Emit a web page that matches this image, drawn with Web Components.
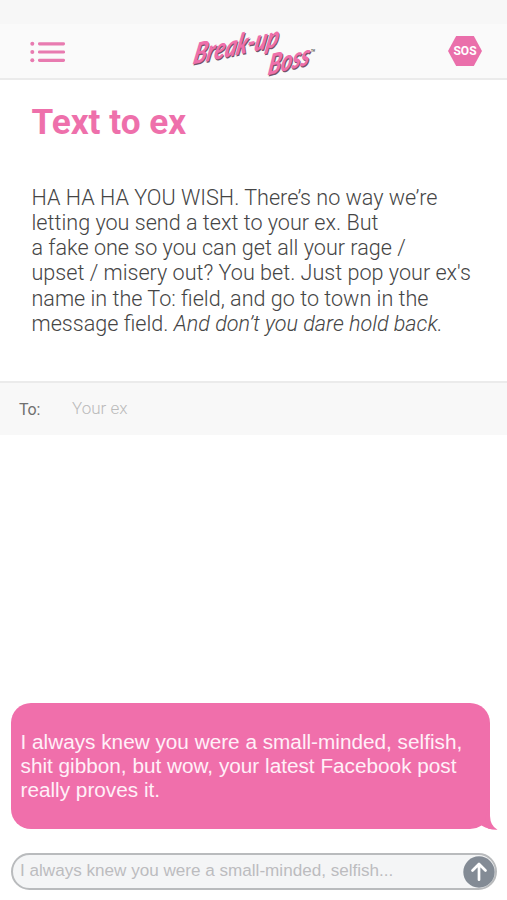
<!DOCTYPE html>
<html lang="en"><head><meta charset="utf-8"><title>Text to ex</title>
<style>html,body{margin:0;height:100%;background:#fff;overflow:hidden}</style></head>
<body><breakup-app></breakup-app>
<script>
const define=(name,html)=>customElements.define(name,class extends HTMLElement{
  constructor(){super();this.attachShadow({mode:'open'}).innerHTML=html;}
});
define('menu-icon',`<style>:host{display:block;width:36px;height:22px}svg{display:block}</style>
<svg width="36" height="22" viewBox="0 0 36 22" fill="#e87bb0"><circle cx="2.3" cy="2.8" r="2"/><circle cx="2.3" cy="11" r="2"/><circle cx="2.3" cy="19.3" r="2"/>
<rect x="8" y="1.2" width="27" height="3.2" rx="1.4"/><rect x="8" y="9.4" width="27" height="3.2" rx="1.4"/><rect x="8" y="17.7" width="27" height="3.2" rx="1.4"/></svg>`);
define('brand-logo',`<style>:host{display:block;width:130px;height:56px}svg{display:block;overflow:visible}
text{font-family:Lato,sans-serif;font-weight:900;font-style:italic}.s{fill:#77536a}.f{fill:#ee6fab}</style>
<svg width="130" height="56" viewBox="0 0 130 56">
<g transform="translate(3 40.5) rotate(-12) skewX(-24)"><text class="s" x="1.2" y="1.4" font-size="28" textLength="87" lengthAdjust="spacingAndGlyphs" aria-hidden="true">Break-up</text><text class="f" font-size="28" textLength="87" lengthAdjust="spacingAndGlyphs">Break-up</text></g>
<g transform="translate(78 51.5) rotate(-15) skewX(-24)"><text class="s" x="1.2" y="1.4" font-size="27" textLength="43" lengthAdjust="spacingAndGlyphs" aria-hidden="true">Boss</text><text class="f" font-size="27" textLength="43" lengthAdjust="spacingAndGlyphs">Boss</text></g>
<text x="122" y="28" font-size="2.8" fill="#555">TM</text></svg>`);
define('sos-badge',`<style>:host{display:grid;place-items:center;width:34px;height:30px;background:#ea6fab;clip-path:polygon(24% 0,76% 0,100% 50%,76% 100%,24% 100%,0 50%);font:700 12px Roboto,sans-serif;color:#fff}</style><span><slot></slot></span>`);
define('top-bar',`<style>:host{display:block;height:80px;box-sizing:border-box;background:linear-gradient(#f7f7f7 24px,#fafafa 24px);border-bottom:2px solid #ebebeb;padding:24px 25px 0 30px}
div{display:flex;justify-content:space-between;align-items:flex-start}menu-icon{margin-top:17px}brand-logo{margin:0 0 0 -6px}sos-badge{margin-top:12px}</style>
<div><menu-icon></menu-icon><brand-logo></brand-logo><sos-badge>SOS</sos-badge></div>`);
define('intro-copy',`<style>:host{display:block;height:301px;box-sizing:border-box;padding:20px 0 0 31.5px;color:#454545}
h1{margin:0;font:700 35.2px/44px Roboto,sans-serif;color:#ee70ab}p{margin:40.7px 0 0;font:300 21.6px/25.2px Roboto,sans-serif;white-space:nowrap}span{display:block}</style>
<h1>Text to ex</h1><p><span>HA HA HA YOU WISH. There’s no way we’re</span><span>letting you send a text to your ex. But</span><span>a fake one so you can get all your rage /</span><span>upset / misery out? You bet. Just pop your ex's</span><span>name in the To: field, and go to town in the</span><span>message field. <em>And don’t you dare hold back.</em></span></p>`);
define('recipient-field',`<style>:host{display:flex;height:54px;box-sizing:border-box;background:#f8f8f8;border-top:2px solid #ebebeb;padding-left:19px;align-items:center;font:400 16px/20px Roboto,sans-serif;color:#707070}
label{width:53px;padding-top:1px;letter-spacing:-.2px}span{font-weight:300;font-size:17px;color:#bbb;padding-bottom:2px}</style><label>To:</label><span><slot></slot></span>`);
define('message-bubble',`<style>:host{display:block;position:relative;width:479px;height:126px;box-sizing:border-box;margin-left:11px;padding:27px 0 0 9.5px;background:#f06fab;border-radius:20px 20px 0 20px;color:#fff0f8;font:400 20.75px/24px "Liberation Sans",sans-serif;white-space:nowrap}
svg{position:absolute;left:459px;top:96px}span{display:block}</style>
<span>I always knew you were a small-minded, selfish,</span><span>shit gibbon, but wow, your latest Facebook post</span><span>really proves it.</span>
<svg width="30" height="32" viewBox="0 0 30 32"><path fill="#fff" d="M0 32V30Q7 29.5 11.5 26.5Q15 28.5 20 30V32Z"/><path fill="#f06fab" d="M20 0V17Q20.3 27 27.5 30.7Q23 31 18 29.5L15 20Z"/></svg>`);
define('send-button',`<style>:host{display:block;width:32px;height:32px}svg{display:block}</style><svg width="32" height="32" viewBox="0 0 32 32"><circle cx="16" cy="16" r="15.7" fill="#838b95"/><path d="M16 23.7V9M9.5 14.5L16 8L22.5 14.5" fill="none" stroke="#fff" stroke-width="2.7" stroke-linecap="round" stroke-linejoin="round"/></svg>`);
define('message-composer',`<style>:host{display:flex;align-items:center;justify-content:space-between;width:486px;height:37px;box-sizing:border-box;margin:24px 0 0 11px;padding:0 1px 0 8px;border:2px solid #b9bbbd;border-radius:19px;background:#f4f5f6;color:#bcbcbf;font:400 17.1px/20px "Liberation Sans",sans-serif}span{padding-bottom:1px;margin-left:-1px}send-button{margin-right:-1px}</style><span><slot></slot></span><send-button></send-button>`);
define('breakup-app',`<style>:host{display:flex;flex-direction:column;width:507px;height:900px;background:#fff}section{height:465px;box-sizing:border-box;padding-top:268px}</style>
<top-bar></top-bar><intro-copy></intro-copy><recipient-field>Your ex</recipient-field><section><message-bubble></message-bubble><message-composer>I always knew you were a small-minded, selfish...</message-composer></section>`);
</script></body></html>
